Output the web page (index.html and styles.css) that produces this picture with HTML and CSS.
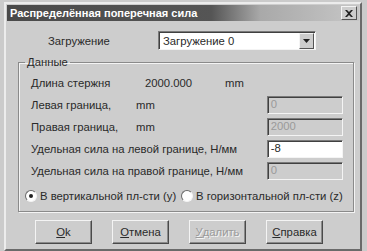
FILE: index.html
```html
<!DOCTYPE html>
<html lang="ru">
<head>
  <meta charset="UTF-8">
  <title>Распределённая поперечная сила</title>
  <link rel="stylesheet" href="styles.css">
</head>
<body>

<div class="dialog">
  <div class="titlebar">
    <span class="title">Распределённая поперечная сила</span>
    <span class="close">
      <svg width="8" height="7" viewBox="0 0 8 7"><path d="M0 0h2l2 2 2-2h2L5 3.5 8 7H6L4 5 2 7H0l3-3.5z" fill="#222"/></svg>
    </span>
  </div>

  <div class="content">
    <div class="load-row">
      <span class="load-label">Загружение</span>
      <div class="combo">
        <span class="combo-text">Загружение 0</span>
        <span class="combo-btn">
          <svg width="7" height="4" viewBox="0 0 7 4"><path d="M0 0h7L3.5 4z" fill="#222"/></svg>
        </span>
      </div>
    </div>

    <fieldset class="group">
      <legend>Данные</legend>
      <div class="row">
        <span class="lbl lbl-len">Длина стержня</span>
        <span class="val">2000.000</span>
        <span>mm</span>
      </div>
      <div class="row">
        <span class="lbl lbl-bound">Левая граница,</span>
        <span>mm</span>
        <span class="field disabled">0</span>
      </div>
      <div class="row">
        <span class="lbl lbl-bound">Правая граница,</span>
        <span>mm</span>
        <span class="field disabled">2000</span>
      </div>
      <div class="row">
        <span class="lbl">Удельная сила на левой границе, Н/мм</span>
        <span class="field">-8</span>
      </div>
      <div class="row">
        <span class="lbl">Удельная сила на правой границе, Н/мм</span>
        <span class="field disabled">0</span>
      </div>
      <div class="radios">
        <span class="radio checked"></span>
        <span class="radio-text first">В вертикальной пл-сти (y)</span>
        <span class="radio"></span>
        <span class="radio-text">В горизонтальной пл-сти (z)</span>
      </div>
    </fieldset>

    <div class="buttons">
      <span class="btn"><u>O</u>k</span>
      <span class="btn"><u>О</u>тмена</span>
      <span class="btn off"><u>У</u>далить</span>
      <span class="btn"><u>С</u>правка</span>
    </div>
  </div>
</div>

</body>
</html>
```

FILE: styles.css
```css
body {
  margin: 0;
  background: #cbcbcb;
  font-family: "Liberation Sans", Arial, sans-serif;
  font-size: 11.3px;
  color: #2a2a2a;
}
.dialog {
  margin: 2px 5px 0 4px;
  height: 249px;
  box-sizing: border-box;
  border: 2px solid;
  border-color: #ececec #6a6a6a #6a6a6a #ececec;
  padding: 1px;
  background: #cdcdcd;
}
.titlebar {
  height: 16px;
  display: flex;
  align-items: center;
  background: linear-gradient(to right, #4a4a4a 0, #555 58%, #a9a9a9 72%, #c6c6c6 100%);
}
.title { color: #fff; font-weight: bold; font-size: 11px; padding-left: 3px; flex: 1; }
.close {
  width: 14px; height: 12px; margin-right: 2px;
  display: flex; align-items: center; justify-content: center;
  background: #cdcdcd;
  border: 1px solid; border-color: #f4f4f4 #555 #555 #f4f4f4;
}

.load-row { display: flex; align-items: center; height: 19px; margin-top: 10px; padding-left: 41px; }
.load-label { width: 110px; }
.combo {
  width: 158px; height: 19px; box-sizing: border-box;
  display: flex; align-items: center;
  background: #fff;
  border: 1px solid; border-color: #7a7a7a #f4f4f4 #f4f4f4 #7a7a7a;
  box-shadow: inset 1px 1px 0 #404040;
}
.combo-text { flex: 1; padding-left: 4px; }
.combo-btn {
  width: 13px; height: 14px; margin: 1px 1px 0 0;
  display: flex; align-items: center; justify-content: center;
  background: #cdcdcd;
  border: 1px solid; border-color: #f4f4f4 #555 #555 #f4f4f4;
}

.group {
  margin: 6px 8px 0 11px;
  padding: 3px 10px 4px 12px;
  border: 1px solid #8a8a8a;
  box-shadow: inset 1px 1px 0 #f4f4f4, 1px 1px 0 #f4f4f4;
}
.group legend { margin-left: -6px; padding: 0 2px; line-height: 13px; }
.row { display: flex; align-items: center; height: 22px; white-space: nowrap; }
.lbl-len { width: 114px; }
.val { width: 80px; }
.lbl-bound { width: 105px; }
.field {
  margin-left: auto;
  width: 76px; height: 18px; box-sizing: border-box;
  padding: 1px 0 0 3px;
  background: #fff;
  border: 1px solid; border-color: #7a7a7a #f4f4f4 #f4f4f4 #7a7a7a;
  box-shadow: inset 1px 1px 0 #404040;
}
.field.disabled { background: #cdcdcd; color: #9a9a9a; }

.radios { display: flex; align-items: center; height: 22px; margin: 3px 0 0 -6px; white-space: nowrap; }
.radio {
  width: 10px; height: 10px; border-radius: 50%;
  background: #fff;
  border: 1px solid; border-color: #6a6a6a #f4f4f4 #f4f4f4 #6a6a6a;
  display: flex; align-items: center; justify-content: center;
}
.radio.checked::after { content: ""; width: 4px; height: 4px; border-radius: 50%; background: #222; }
.radio-text { margin-left: 3px; }
.radio-text.first { width: 141px; }

.buttons { display: flex; gap: 20px; margin-top: 8px; padding-left: 28px; }
.btn {
  width: 57px; height: 24px; box-sizing: border-box;
  display: flex; align-items: center; justify-content: center;
  border: 1px solid; border-color: #f4f4f4 #4a4a4a #4a4a4a #f4f4f4;
  box-shadow: inset -1px -1px 0 #8a8a8a;
}
.btn.off { color: #9a9a9a; text-shadow: 1px 1px 0 #f4f4f4; }
```
